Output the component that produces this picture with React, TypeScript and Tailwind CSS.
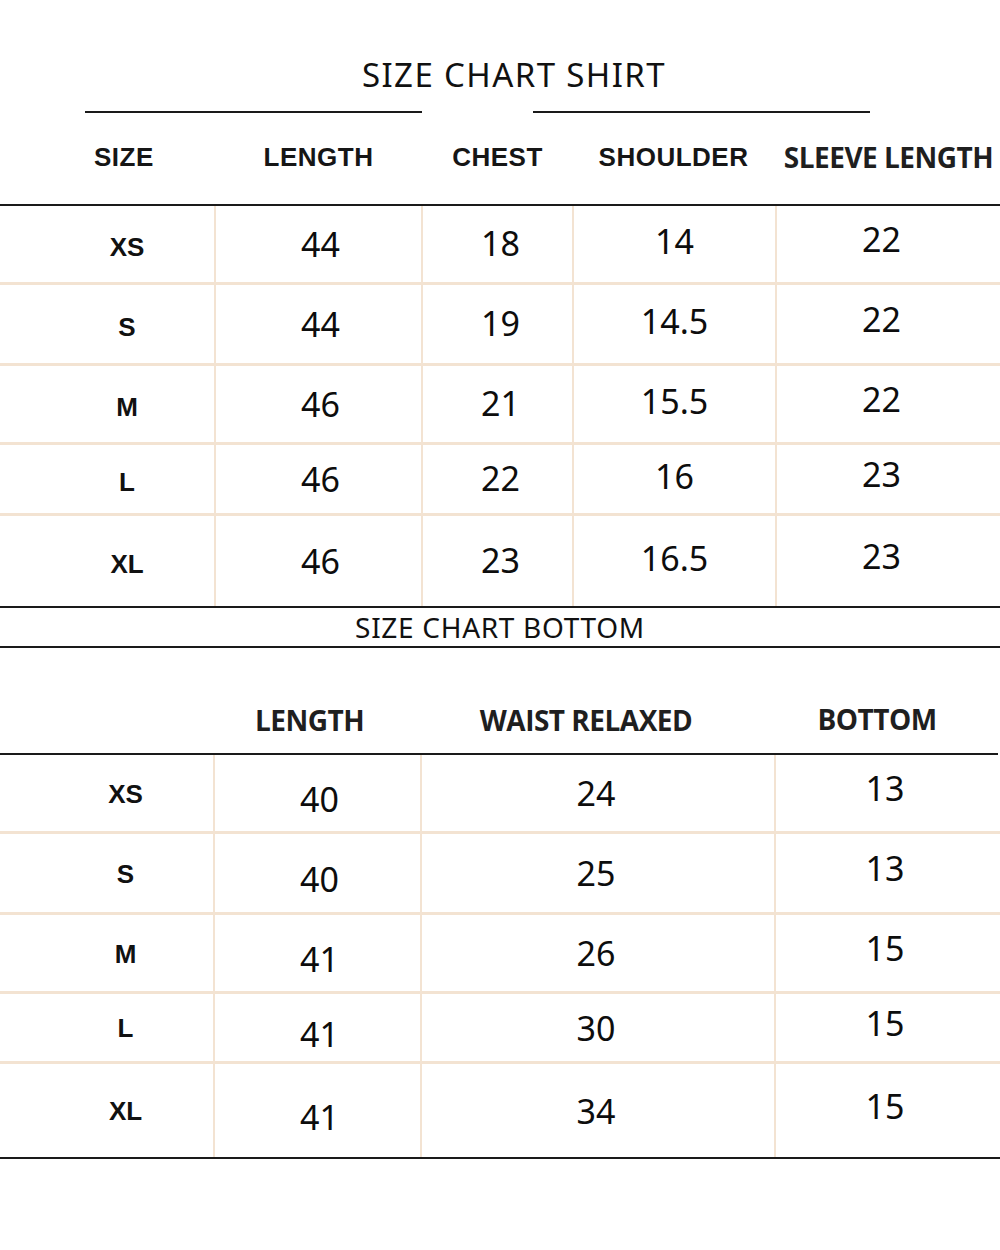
import React from "react";

const beige = "border-[#f3e3d2]";

const shirtRows = [
  { h: "h-[79px]", v: ["XS", "44", "18", "14", "22"] },
  { h: "h-[81px]", v: ["S", "44", "19", "14.5", "22"] },
  { h: "h-[79px]", v: ["M", "46", "21", "15.5", "22"] },
  { h: "h-[71px]", v: ["L", "46", "22", "16", "23"] },
  { h: "h-[90px]", v: ["XL", "46", "23", "16.5", "23"] },
];

const bottomRows = [
  { h: "h-[79px]", v: ["XS", "40", "24", "13"] },
  { h: "h-[81px]", v: ["S", "40", "25", "13"] },
  { h: "h-[79px]", v: ["M", "41", "26", "15"] },
  { h: "h-[70px]", v: ["L", "41", "30", "15"] },
  { h: "h-[93px]", v: ["XL", "41", "34", "15"] },
];

const sizeCls =
  "font-['Liberation_Sans',Arial,sans-serif] font-bold text-[26px] text-[#111]";
const numCls = "font-['Noto_Sans',sans-serif] text-[34px] text-[#0d0d0d] leading-none";
const headA =
  "font-['Liberation_Sans',Arial,sans-serif] font-bold text-[26px] tracking-[0.5px] text-[#161616]";
const headB = "font-['Open_Sans',sans-serif] font-bold text-[28px] tracking-[-0.5px] text-[#1f1f1f]";

export default function App() {
  return (
    <div className="w-[1000px] h-[1250px] bg-white overflow-hidden">
      {/* Title */}
      <div className="pt-[52px] h-[98px] flex justify-center">
        <div className="font-['Noto_Sans',sans-serif] text-[33px] leading-[46px] tracking-[1.4px] text-[#111] pl-[28px]">
          SIZE CHART SHIRT
        </div>
      </div>
      <div className="mt-[13px] flex h-[2px]">
        <div className="ml-[85px] w-[337px] bg-[#1a1a1a]" />
        <div className="ml-[111px] w-[337px] bg-[#1a1a1a]" />
      </div>

      {/* Shirt header */}
      <div className="h-[91px] grid grid-cols-[214px_207px_151px_203px_1fr] items-center pb-[2px]">
        <div className={`${headA} pl-[94px]`}>SIZE</div>
        <div className={`${headA} text-center pl-[2px]`}>LENGTH</div>
        <div className={`${headA} text-center pl-[2px]`}>CHEST</div>
        <div className={`${headA} text-center`}>SHOULDER</div>
        <div className={`${headB} text-center whitespace-nowrap pl-[2px] pb-[2px]`}>SLEEVE LENGTH</div>
      </div>
      <div className="h-[2px] bg-[#1a1a1a]" />

      {/* Shirt rows */}
      <div>
        {shirtRows.map((r, i) => (
          <div
            key={i}
            className={`${r.h} grid grid-cols-[214px_207px_151px_203px_1fr] ${
              i < shirtRows.length - 1 ? `border-b-[3px] ${beige}` : ""
            }`}
          >
            <div className={`flex items-center justify-center pl-[40px] pt-[6px] ${sizeCls}`}>{r.v[0]}</div>
            <div className={`flex items-center justify-center border-l-2 ${beige} pl-[4px] ${numCls}`}>{r.v[1]}</div>
            <div className={`flex items-center justify-center border-l-2 ${beige} pl-[6px] pb-[2px] ${numCls}`}>{r.v[2]}</div>
            <div className={`flex items-center justify-center border-l-2 ${beige} pb-[6px] ${numCls}`}>{r.v[3]}</div>
            <div className={`flex items-center justify-center border-l-2 ${beige} pb-[10px] pr-[14px] ${numCls}`}>{r.v[4]}</div>
          </div>
        ))}
      </div>

      {/* Bottom title band */}
      <div className="h-[2px] bg-[#1a1a1a]" />
      <div className="h-[38px] flex items-center justify-center">
        <div className="font-['Noto_Sans',sans-serif] text-[28px] leading-none tracking-[0.7px] text-[#111] pb-[1px]">
          SIZE CHART BOTTOM
        </div>
      </div>
      <div className="h-[2px] bg-[#1a1a1a]" />

      {/* Bottom header */}
      <div className="h-[105px] grid grid-cols-[213px_207px_354px_1fr] items-center pt-[38px]">
        <div />
        <div className={`${headB} text-center pr-[14px]`}>LENGTH</div>
        <div className={`${headB} text-center pr-[22px] whitespace-nowrap`}>WAIST RELAXED</div>
        <div className={`${headB} text-center pr-[20px] pb-[2px]`}>BOTTOM</div>
      </div>
      <div className="h-[2px] w-[998px] bg-[#1a1a1a]" />

      {/* Bottom rows */}
      <div>
        {bottomRows.map((r, i) => (
          <div
            key={i}
            className={`${r.h} grid grid-cols-[213px_207px_354px_1fr] ${
              i < bottomRows.length - 1 ? `border-b-[3px] ${beige}` : ""
            }`}
          >
            <div className={`flex items-center justify-center pl-[38px] pt-[2px] ${sizeCls}`}>{r.v[0]}</div>
            <div className={`flex items-center justify-center border-l-2 ${beige} pl-[4px] pt-[12px] ${numCls}`}>{r.v[1]}</div>
            <div className={`flex items-center justify-center border-l-2 ${beige} pr-[4px] ${numCls}`}>{r.v[2]}</div>
            <div className={`flex items-center justify-center border-l-2 ${beige} pb-[10px] pr-[6px] ${numCls}`}>{r.v[3]}</div>
          </div>
        ))}
      </div>
      <div className="h-[2px] bg-[#1a1a1a]" />
    </div>
  );
}
